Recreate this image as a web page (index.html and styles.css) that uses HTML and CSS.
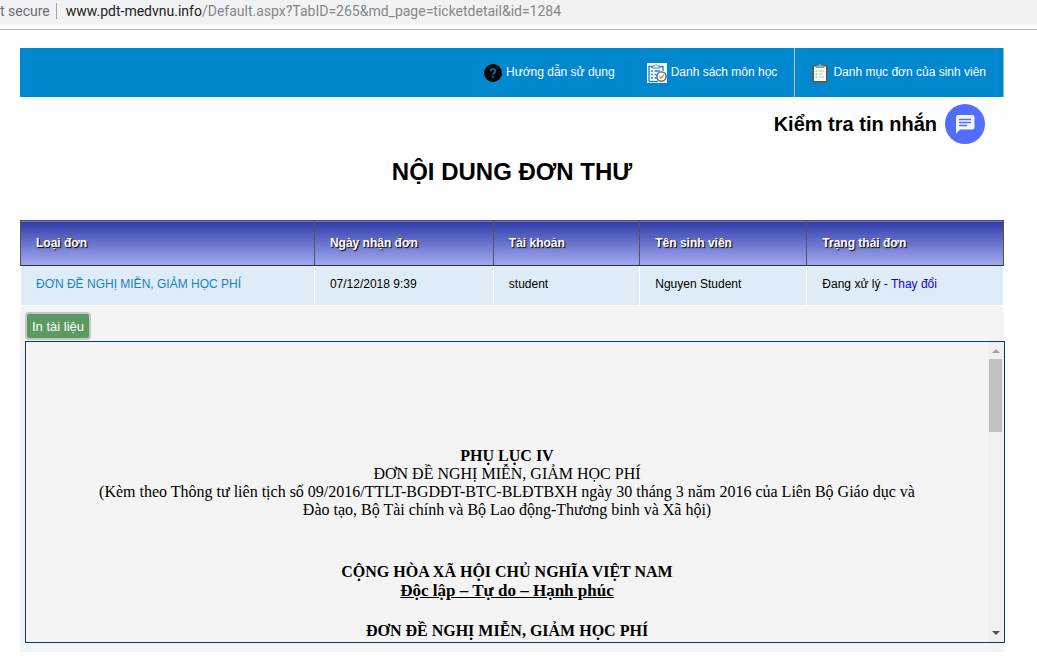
FILE: index.html
```html
<!DOCTYPE html>
<html lang="vi">
<head>
<meta charset="utf-8">
<meta name="viewport" content="width=device-width, initial-scale=1">
<title>Nội dung đơn thư</title>
<link rel="stylesheet" href="styles.css">
</head>
<body>
<div class="address-bar">
  <span class="security">t secure</span>
  <span class="url"><span class="host">www.pdt-medvnu.info</span>/Default.aspx?TabID=265&amp;md_page=ticketdetail&amp;id=1284</span>
</div>
<div class="page">
  <nav class="menu">
    <a class="menu-item" href="#">
      <svg class="icon-help" viewBox="0 0 18 18" aria-hidden="true">
        <circle cx="9" cy="9" r="9" fill="#050505"/>
        <path d="M6.6 7.3C6.6 4.2 11.4 4.3 11.4 7C11.4 8.8 9.1 8.8 9.1 10.8" fill="none" stroke="#0a6fae" stroke-width="1.7"/>
        <circle cx="9.1" cy="13" r="1.1" fill="#0a6fae"/>
      </svg>
      <span>Hướng dẫn sử dụng</span>
    </a>
    <a class="menu-item" href="#">
      <svg class="icon-list" viewBox="0 0 20 20" aria-hidden="true">
        <rect width="20" height="20" fill="#fff"/>
        <path d="M2 18.500V3.500h3M13 3.500h3V8M2 18.500h9" fill="none" stroke="#2d7fc0" stroke-width="1.400"/>
        <path d="M5 5V3h2.500q1.500-3 3 0H13v2z" fill="#fff" stroke="#2d7fc0"/>
        <path d="M4 8h2M4 11.500h2M4 15h2M7.500 8H13M7.500 11.500h2M7.500 15h2" stroke="#2d7fc0" stroke-width="1.300"/>
        <circle cx="14.500" cy="13.500" r="4.600" fill="#fff" stroke="#365f86" stroke-width="1.400"/>
        <path d="M12.300 13.600l1.700 1.700 3-3.600" fill="none" stroke="#ef8a2b" stroke-width="1.400"/>
      </svg>
      <span>Danh sách môn học</span>
    </a>
    <a class="menu-item" href="#">
      <svg class="icon-board" viewBox="0 0 16 20" aria-hidden="true">
        <rect x=".5" y="2" width="15" height="17.500" rx="1" fill="#69513f"/>
        <rect x="2" y="3.500" width="12" height="14.500" fill="#f5f6ef"/>
        <path d="M4 4.500V2.500h2.500q1.500-3.500 3 0H12v2z" fill="#a6aaa8" stroke="#777" stroke-width=".6"/>
        <path d="M3.500 8h1.500M3.500 11h1.500M3.500 14h1.500" stroke="#72b36c" stroke-width="1.200"/>
        <path d="M6.500 8H12M6.500 11H11M6.500 14H12" stroke="#c6cac6"/>
      </svg>
      <span>Danh mục đơn của sinh viên</span>
    </a>
  </nav>
  <a class="messages" href="#">
    <span>Kiểm tra tin nhắn</span>
    <svg class="icon-chat" viewBox="0 0 40 40" aria-hidden="true">
      <circle cx="20" cy="20" r="20" fill="#536dfe"/>
      <path d="M12.500 11h15q2 0 2 2v10.500q0 2-2 2H15L11 29.500V13q0-2 1.500-2z" fill="#f5f5f5"/>
      <path d="M14 15.500h12M14 18.500h12M14 21.500h8" stroke="#536dfe" stroke-width="1.600"/>
    </svg>
  </a>
  <h1 class="title">NỘI DUNG ĐƠN THƯ</h1>
  <main class="content">
    <table class="tickets">
      <colgroup><col class="c-type"><col class="c-date"><col class="c-account"><col class="c-name"><col class="c-status"></colgroup>
      <thead>
        <tr><th>Loại đơn</th><th>Ngày nhận đơn</th><th>Tài khoản</th><th>Tên sinh viên</th><th>Trạng thái đơn</th></tr>
      </thead>
      <tbody>
        <tr>
          <td><a class="ticket-link" href="#">ĐƠN ĐỀ NGHỊ MIỄN, GIẢM HỌC PHÍ</a></td>
          <td>07/12/2018 9:39</td>
          <td>student</td>
          <td>Nguyen Student</td>
          <td>Đang xử lý - <a class="change-link" href="#">Thay đổi</a></td>
        </tr>
      </tbody>
    </table>
    <button class="print" type="button">In tài liệu</button>
    <div class="viewer">
      <article class="document">
        <p><b>PHỤ LỤC IV</b></p>
        <p>ĐƠN ĐỀ NGHỊ MIỄN, GIẢM HỌC PHÍ</p>
        <p>(Kèm theo Thông tư liên tịch số 09/2016/TTLT-BGDĐT-BTC-BLĐTBXH ngày 30 tháng 3 năm 2016 của Liên Bộ Giáo dục và Đào tạo, Bộ Tài chính và Bộ Lao động-Thương binh và Xã hội)</p>
        <p class="nation"><b>CỘNG HÒA XÃ HỘI CHỦ NGHĨA VIỆT NAM</b></p>
        <p class="motto"><b>Độc lập – Tự do – Hạnh phúc</b></p>
        <p class="form-name"><b>ĐƠN ĐỀ NGHỊ MIỄN, GIẢM HỌC PHÍ</b></p>
      </article>
      <div class="scrollbar" aria-hidden="true">
        <svg class="arrow" viewBox="0 0 8 4"><path d="M0 4L4 0l4 4z" fill="#a3a3a3"/></svg>
        <div class="thumb"></div>
        <svg class="arrow arrow-down" viewBox="0 0 8 4"><path d="M0 0l4 4 4-4z" fill="#505050"/></svg>
      </div>
    </div>
  </main>
</div>
</body>
</html>
```
FILE: styles.css
```css
* { box-sizing: border-box; }
body {
  margin: 0;
  background: #fff;
  color: #000;
  font-family: "Liberation Sans", Arial, sans-serif;
  font-size: 12px;
}
a { color: inherit; text-decoration: none; }
p { margin: 0; }

.address-bar {
  display: flex;
  align-items: center;
  height: 30px;
  padding-bottom: 8px;
  background: linear-gradient(#f1f2f3 25px, #fff 25px);
  border-bottom: 1px solid #b4b4b4;
  font-family: Roboto, "Noto Sans", sans-serif;
  font-size: 14px;
  line-height: 20px;
  color: #858789;
  white-space: nowrap;
}
.security {
  padding-right: 6px;
  border-right: 1px solid #a5a7a9;
  line-height: 16px;
  color: #6b6e72;
}
.url { padding-left: 9px; }
.host { color: #222; }

.page { padding: 18px 33px 5px 20px; }

.menu {
  display: flex;
  justify-content: flex-end;
  height: 49px;
  background: #0088cf;
  border-right: 1px solid #8fb9d2;
}
.menu-item {
  display: flex;
  align-items: center;
  gap: 4px;
  padding: 0 17px 0 16px;
  color: #fff;
}
.menu-item:first-child { padding-right: 16px; }
.menu-item:last-child { border-left: 1px solid #b8bfc9; }
.menu-item span { padding-bottom: 2px; }
.icon-help { width: 18px; height: 18px; }
.icon-list { width: 20px; height: 20px; }
.icon-board { width: 18px; height: 20px; }

.messages {
  display: flex;
  justify-content: flex-end;
  align-items: center;
  gap: 8px;
  padding: 7px 19px 0 0;
  font-size: 20px;
  font-weight: bold;
}
.icon-chat { width: 40px; height: 40px; }

.title {
  margin: 14px 0 35px;
  font-size: 24px;
  line-height: 27px;
  text-align: center;
}

.content { padding-bottom: 9px; background: #f4f4f4; }
.tickets {
  width: 100%;
  table-layout: fixed;
  border-collapse: collapse;
}
.c-type { width: 29.9%; }
.c-date { width: 18.2%; }
.c-account { width: 14.9%; }
.c-name { width: 17%; }
.c-status { width: 20%; }
.tickets th {
  height: 45px;
  padding: 0 15px;
  border: 1px solid #555;
  border-bottom-color: #333;
  background: linear-gradient(#2f3ca8, #a5aaf0);
  color: #fff;
  text-align: left;
  text-shadow: 1px 1px 1px #000;
}
.tickets td {
  height: 40px;
  padding: 0 15px 4px;
  border: 1px solid #fff;
  background: #deecf7;
}
.ticket-link { color: #1683c6; }
.change-link { color: #1400e6; }

.print {
  display: block;
  height: 28px;
  margin: 6px 5px 1px;
  padding: 0 5px;
  border: 2px solid #c4c8c4;
  border-radius: 4px;
  background: #5b9a63;
  color: #fff;
  font: 13px "Liberation Sans", Arial, sans-serif;
}
.viewer {
  display: flex;
  margin: 0 -1px 0 5px;
  border: 1px solid #003a75;
  height: 302px;
  overflow: hidden;
}
.document {
  flex: 1;
  padding: 105px 70px 0;
  font-family: "Liberation Serif", "Times New Roman", serif;
  font-size: 16px;
  line-height: 18px;
  text-align: center;
}
.nation { margin-top: 44px; }
.motto { margin-top: 1px; font-size: 17px; text-decoration: underline; }
.form-name { margin-top: 22px; }
.scrollbar {
  display: flex;
  flex-direction: column;
  align-items: center;
  width: 16px;
  padding: 7px 1px 7px 0;
  background: #f0f0f0;
}
.arrow { width: 8px; height: 4px; }
.arrow-down { margin-top: auto; }
.thumb { width: 13px; height: 73px; margin-top: 6px; background: #c1c1c1; }
```
